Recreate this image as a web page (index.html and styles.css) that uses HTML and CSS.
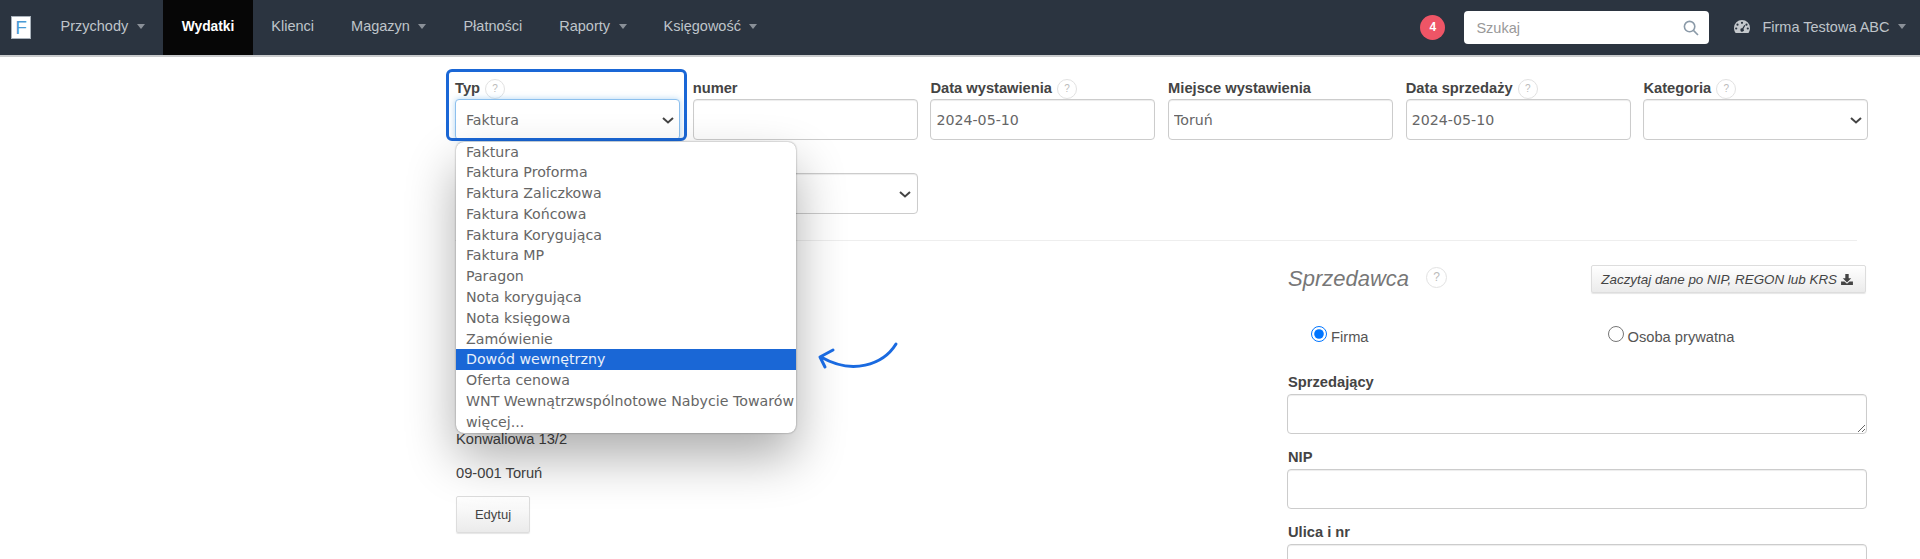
FILE: index.html
```html
<!doctype html>
<html>
<head>
	<meta charset="utf-8">
	<title>Faktura</title>
	<link rel="stylesheet" href="styles.css">
</head>
<body>
	<nav class="navbar">
		<a class="brand"><span class="brand-mark">F</span></a>
		<a class="nav-item">Przychody<span class="caret"></span></a>
		<a class="nav-item active">Wydatki</a>
		<a class="nav-item">Klienci</a>
		<a class="nav-item">Magazyn<span class="caret"></span></a>
		<a class="nav-item">Płatności</a>
		<a class="nav-item">Raporty<span class="caret"></span></a>
		<a class="nav-item">Księgowość<span class="caret"></span></a>
		<div class="nav-right">
			<span class="badge">4</span>
			<div class="search">
				<span class="search-text">Szukaj</span>
				<svg class="search-icon" viewBox="0 0 16 16"><circle cx="6.6" cy="6.6" r="5.2"/><path d="M10.4 10.4L15 15"/></svg>
			</div>
			<a class="user">
				<svg class="gauge" viewBox="0 0 16 13"><path fill-rule="evenodd" d="M8 0a8 8 0 0 1 8 8c0 1.900-.6 3.600-1.600 5H1.600A8 8 0 0 1 0 8a8 8 0 0 1 8-8zM8 1.700a1.100 1.100 0 1 0 0 2.200 1.100 1.100 0 0 0 0-2.200zM3.500 3.600a1.100 1.100 0 1 0 0 2.200 1.100 1.100 0 0 0 0-2.200zM12.500 3.600a1.100 1.100 0 1 0 0 2.200 1.100 1.100 0 0 0 0-2.200zM2.200 7.400a1.100 1.100 0 1 0 0 2.200 1.100 1.100 0 0 0 0-2.200zM13.800 7.400a1.100 1.100 0 1 0 0 2.200 1.100 1.100 0 0 0 0-2.200zM10.300 5L8.300 8.300a1.700 1.700 0 1 0 1.100.6l1.900-3.500z"/></svg>
				Firma Testowa ABC<span class="caret"></span>
			</a>
		</div>
	</nav>

	<main class="page">
		<div class="fields">
			<div class="field">
				<label>Typ<span class="help">?</span></label>
				<div class="select-wrap">
					<select class="control focused"><option>Faktura</option></select>
					<svg class="chevron" viewBox="0 0 12 7"><path d="M1 1l5 4.500L11 1"/></svg>
				</div>
				<div class="type-mark"></div>
				<ul class="type-menu">
					<li>Faktura</li>
					<li>Faktura Proforma</li>
					<li>Faktura Zaliczkowa</li>
					<li>Faktura Końcowa</li>
					<li>Faktura Korygująca</li>
					<li>Faktura MP</li>
					<li>Paragon</li>
					<li>Nota korygująca</li>
					<li>Nota księgowa</li>
					<li>Zamówienie</li>
					<li class="selected">Dowód wewnętrzny</li>
					<li>Oferta cenowa</li>
					<li>WNT Wewnątrzwspólnotowe Nabycie Towarów</li>
					<li>więcej...</li>
				</ul>
				<svg class="arrow" viewBox="0 0 84 34"><path d="M80 3C67 24 36 34 5 16M17 9L4 16L9 26"/></svg>
			</div>
			<div class="field">
				<label>numer</label>
				<input class="control" type="text">
			</div>
			<div class="field">
				<label>Data wystawienia<span class="help">?</span></label>
				<input class="control" type="text" value="2024-05-10">
			</div>
			<div class="field">
				<label>Miejsce wystawienia</label>
				<input class="control" type="text" value="Toruń">
			</div>
			<div class="field">
				<label>Data sprzedaży<span class="help">?</span></label>
				<input class="control" type="text" value="2024-05-10">
			</div>
			<div class="field">
				<label>Kategoria<span class="help">?</span></label>
				<div class="select-wrap">
					<select class="control"><option></option></select>
					<svg class="chevron" viewBox="0 0 12 7"><path d="M1 1l5 4.500L11 1"/></svg>
				</div>
			</div>
			<div class="field second">
				<div class="select-wrap">
					<select class="control"><option></option></select>
					<svg class="chevron" viewBox="0 0 12 7"><path d="M1 1l5 4.500L11 1"/></svg>
				</div>
			</div>
		</div>

		<hr>

		<div class="parties">
			<section class="buyer">
				<p>Konwaliowa 13/2</p>
				<p>09-001 Toruń</p>
				<button class="btn edit">Edytuj</button>
			</section>
			<section class="seller">
				<div class="seller-head">
					<h2>Sprzedawca</h2>
					<span class="help big">?</span>
					<button class="btn fetch">Zaczytaj dane po NIP, REGON lub KRS
						<svg class="download" viewBox="0 0 14 13"><path d="M5 0h4v5h3L7 10 2 5h3zM0 9h4l3 2.500L10 9h4v4H0z"/></svg>
					</button>
				</div>
				<div class="radios">
					<label><input type="radio" name="kind" checked>Firma</label>
					<label><input type="radio" name="kind">Osoba prywatna</label>
				</div>
				<label class="block">Sprzedający</label>
				<textarea class="control area"></textarea>
				<label class="block">NIP</label>
				<input class="control" type="text">
				<label class="block">Ulica i nr</label>
				<input class="control" type="text">
			</section>
		</div>
	</main>
</body>
</html>
```

FILE: styles.css
```css
html, body {
	height: 559px;
	overflow: hidden;
}
body {
	margin: 0;
	background: #fff;
	color: #444;
	font-family: "Liberation Sans", Arial, sans-serif;
	font-size: 14.7px;
}

/* top bar */
.navbar {
	display: flex;
	align-items: stretch;
	height: 55px;
	background: #2b3440;
	border-bottom: 2px solid #c9cbcd;
	color: #bfc4ca;
	font-size: 14.500px;
}
.brand {
	display: flex;
	align-items: center;
	padding: 0 11px;
}
.brand-mark {
	box-sizing: border-box;
	width: 20px;
	height: 23px;
	background: #fff;
	border: 1px solid #a9b2bb;
	color: #4a9ad4;
	font-size: 19px;
	line-height: 21px;
	text-align: center;
}
.nav-item {
	display: flex;
	align-items: center;
	padding: 0 18.500px;
	padding-bottom: 3px;
}
.nav-item.active {
	background: #060606;
	color: #fff;
	font-size: 13.800px;
	font-weight: 700;
}
.caret {
	display: inline-block;
	margin-left: 8.500px;
	border-top: 5px solid #8a9098;
	border-left: 4.500px solid transparent;
	border-right: 4.500px solid transparent;
}
.nav-right {
	display: flex;
	align-items: center;
	margin-left: auto;
	padding-right: 14px;
}
.badge {
	width: 25px;
	height: 25px;
	border-radius: 50%;
	background: #ee5566;
	color: #fff;
	font-size: 12px;
	font-weight: 700;
	line-height: 25px;
	text-align: center;
}
.search {
	display: flex;
	align-items: center;
	justify-content: space-between;
	box-sizing: border-box;
	width: 245px;
	height: 33px;
	margin-left: 19px;
	padding: 0 10px 0 12px;
	background: #fff;
	border-radius: 4px;
	color: #999;
}
.search-icon {
	width: 16px;
	height: 16px;
	fill: none;
	stroke: #8b9aa8;
	stroke-width: 1.600;
}
.user {
	display: flex;
	align-items: center;
	margin-left: 25px;
	padding-bottom: 2px;
}
.gauge {
	width: 16px;
	height: 13px;
	margin-right: 12px;
	fill: #c4c8cc;
}

/* form */
.page {
	padding: 21px 45px 0 455px;
}
.fields {
	display: grid;
	grid-template-columns: repeat(6, 225px);
	column-gap: 12.700px;
	row-gap: 33px;
}
.field {
	position: relative;
}
.field label, .block {
	display: block;
	height: 20px;
	margin-bottom: 1px;
	font-weight: 700;
	line-height: 20px;
}
.field.second {
	grid-column: 2;
}
.help {
	display: inline-block;
	width: 18px;
	height: 18px;
	margin-left: 5px;
	border: 1px solid #e2e2e2;
	border-radius: 50%;
	color: #bbb;
	font-size: 10px;
	font-weight: 400;
	line-height: 18px;
	text-align: center;
	vertical-align: 1px;
}
.control {
	display: block;
	box-sizing: border-box;
	width: 100%;
	height: 41px;
	padding: 0 5px;
	background: #fff;
	border: 1px solid #ccc;
	border-radius: 4px;
	box-shadow: inset 0 1px 1px rgba(0, 0, 0, .075);
	color: #666;
	font-family: "DejaVu Sans", sans-serif;
	font-size: 14.200px;
	outline: none;
}
select.control {
	padding: 0 24px 0 10px;
	appearance: none;
}
.select-wrap {
	position: relative;
}
.chevron {
	position: absolute;
	top: 18px;
	right: 6.500px;
	width: 12px;
	height: 7px;
	fill: none;
	stroke: #444;
	stroke-width: 2;
	pointer-events: none;
}
.control.focused {
	border-color: #8dc0ee;
	box-shadow: 0 0 6px rgba(102, 175, 233, .5);
}
.type-mark {
	position: absolute;
	top: -9px;
	left: -9px;
	width: 241px;
	height: 72px;
	box-sizing: border-box;
	border: 3px solid #1a67d6;
	border-radius: 6px;
}
.type-menu {
	position: absolute;
	z-index: 2;
	top: 63.500px;
	left: 1px;
	width: 340px;
	height: 291px;
	box-sizing: border-box;
	margin: 0;
	padding: 0;
	overflow: hidden;
	list-style: none;
	background: #fff;
	border-radius: 8px;
	box-shadow: 0 0 2px rgba(0, 0, 0, .45), 0 24px 50px rgba(0, 0, 0, .32);
	color: #666;
	font-family: "DejaVu Sans", sans-serif;
	font-size: 14.200px;
	line-height: 20.800px;
}
.type-menu li {
	height: 20.800px;
	padding-left: 10px;
	white-space: nowrap;
}
.type-menu .selected {
	background: #1a67d6;
	color: #e8f0fb;
}
.arrow {
	position: absolute;
	z-index: 3;
	top: 263px;
	left: 361px;
	width: 84px;
	height: 34px;
	fill: none;
	stroke: #1a6ae0;
	stroke-width: 3;
	stroke-linecap: round;
	stroke-linejoin: round;
}

hr {
	height: 0;
	margin: 26px 18px 0 0;
	border: 0;
	border-top: 1px solid #eee;
}

/* below the rule */
.parties {
	display: flex;
	justify-content: space-between;
}
.buyer {
	width: 400px;
	padding: 188px 0 0 1px;
}
.buyer p {
	margin: 0 0 13.700px;
	line-height: 20px;
}
.btn {
	background: linear-gradient(#fff, #ebebeb);
	border: 1px solid #ddd;
	border-radius: 2px;
	box-shadow: 0 1px 1px rgba(0, 0, 0, .1);
	color: #444;
	font-family: "Liberation Sans", Arial, sans-serif;
}
.edit {
	width: 74px;
	height: 37px;
	font-size: 13px;
}
.seller {
	width: 580px;
	margin-right: 8px;
}
.seller .control {
	height: 40px;
}
.seller-head {
	display: flex;
	align-items: center;
	height: 28px;
	margin-top: 24px;
}
.seller-head h2 {
	margin: 0 0 0 1px;
	color: #777;
	font-size: 22px;
	font-style: italic;
	font-weight: 400;
}
.help.big {
	width: 19px;
	height: 19px;
	margin: 0 0 4px 17px;
	font-size: 12px;
	line-height: 19px;
	vertical-align: 0;
}
.fetch {
	display: flex;
	align-items: center;
	height: 28px;
	margin-left: auto;
	margin-right: 1px;
	padding: 0 12px 0 9px;
	font-size: 13.400px;
	font-style: italic;
	white-space: nowrap;
}
.download {
	width: 12px;
	height: 11px;
	margin-left: 4px;
	fill: #444;
}
.radios {
	display: flex;
	height: 20px;
	margin: 34px 0 25px;
	padding-left: 24px;
}
.radios label {
	display: flex;
	flex: none;
	align-items: center;
	width: 296.500px;
	color: #555;
}
.radios input {
	width: 16px;
	height: 16px;
	margin: 0 4px 6px 0;
}
.block {
	margin-top: 13px;
	margin-left: 1px;
}
.seller .block + .control {
	margin-top: 2px;
}
.area {
	resize: vertical;
}
```
